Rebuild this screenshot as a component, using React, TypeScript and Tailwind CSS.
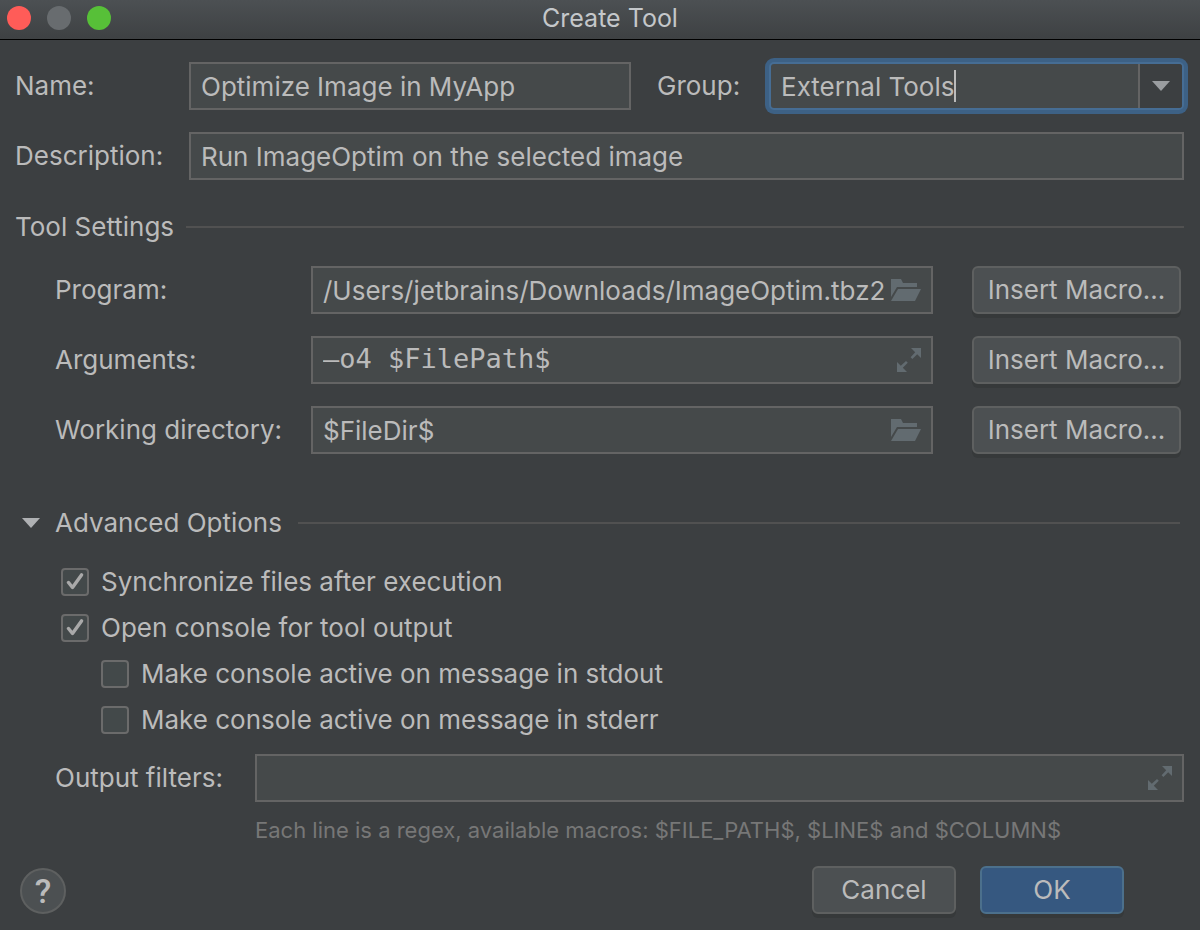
import { useState, type ReactNode } from "react";

const fieldBox =
  "flex h-12 min-w-0 items-center border-2 border-[#646464] bg-[#45494a]";
const fieldInput =
  "h-full min-w-0 flex-1 bg-transparent pl-2.5 text-[#bbbbbb] outline-none";
const pushButton =
  "flex h-12 items-center justify-center rounded-md border-2 border-[#5e6060] bg-[#4c5052] text-[#bbbbbb] shadow-[0_4px_0_#36393a]";

function FolderIcon() {
  return (
    <svg width="30" height="22" viewBox="0 0 30 22" fill="#626b70" aria-hidden="true">
      <path d="M0 0H10L12 4H26V8H6L0 18Z" />
      <path d="M7 10H30L24 22H0Z" />
    </svg>
  );
}

function ExpandIcon() {
  return (
    <svg width="24" height="24" viewBox="0 0 24 24" fill="#626b70" aria-hidden="true">
      <path d="M14 0H24V10L20.2 6.2L15.4 11L13.6 9.2L18.2 4.2Z" />
      <path d="M10 24H0V14L3.8 17.8L9 13L10.8 14.8L5.8 19.8Z" />
    </svg>
  );
}

function Triangle({ color }: { color: string }) {
  return (
    <svg width="18" height="10" viewBox="0 0 18 10" fill={color} aria-hidden="true">
      <path d="M0 0H18L9 10Z" />
    </svg>
  );
}

function SettingRow({
  id,
  label,
  value,
  mono,
  action,
  icon,
}: {
  id: string;
  label: string;
  value: string;
  mono?: boolean;
  action: string;
  icon: ReactNode;
}) {
  return (
    <div className="flex items-center">
      <label htmlFor={id} className="w-64 shrink-0">
        {label}
      </label>
      <div className={`${fieldBox} flex-1 pr-2.5`}>
        <input
          id={id}
          defaultValue={value}
          className={
            mono
              ? `${fieldInput} pb-1 font-['DejaVu_Sans_Mono',monospace] text-[27px]`
              : fieldInput
          }
        />
        <button type="button" aria-label={action} className="shrink-0">
          {icon}
        </button>
      </div>
      <button type="button" className={`${pushButton} ml-[39px] w-[209px] shrink-0`}>
        Insert Macro...
      </button>
    </div>
  );
}

function CheckRow({ label, checked, nested }: { label: string; checked?: boolean; nested?: boolean }) {
  const [on, setOn] = useState(!!checked);
  return (
    <label className={nested ? "flex h-[46px] items-center gap-3 pl-10" : "flex h-[46px] items-center gap-3"}>
      <span className="grid size-7 place-items-center">
        <input
          type="checkbox"
          checked={on}
          onChange={(e) => setOn(e.target.checked)}
          className="size-7 appearance-none rounded-[4px] border-2 border-[#6b6b6b] bg-[#43494a] [grid-area:1/1]"
        />
        {on && (
          <svg
            width="18"
            height="18"
            viewBox="0 0 18 18"
            fill="none"
            stroke="#a9a9a9"
            strokeWidth="3.4"
            strokeLinecap="round"
            strokeLinejoin="round"
            className="pointer-events-none [grid-area:1/1]"
            aria-hidden="true"
          >
            <path d="M2.5 9.5L6.5 14.5L15.5 1.9" />
          </svg>
        )}
      </span>
      <span>{label}</span>
    </label>
  );
}

export default function App() {
  const [open, setOpen] = useState(true);
  return (
    <div className="flex min-h-screen flex-col bg-[#3c3f41] font-['Inter',sans-serif] text-[26px] leading-8 text-[#bbbbbb]">
      <header className="grid h-10 grid-cols-[1fr_auto_1fr] items-center border-b border-black bg-linear-to-b from-[#4c5053] to-[#3e4143] pb-1">
        <div className="flex gap-4 pl-[7px]">
          <button type="button" aria-label="Close" className="size-6 rounded-full bg-[#ff5c58]" />
          <button type="button" aria-label="Minimize" disabled className="size-6 rounded-full bg-[#686c6f]" />
          <button type="button" aria-label="Zoom" className="size-6 rounded-full bg-[#57c038]" />
        </div>
        <h1 className="pl-5 text-[25px] text-[#c4c7ca]">Create Tool</h1>
      </header>

      <form className="flex flex-1 flex-col pt-[22px] pr-4 pb-4 pl-[15px]" onSubmit={(e) => e.preventDefault()}>
        <div className="flex items-center">
          <label htmlFor="name" className="w-[174px] shrink-0">
            Name:
          </label>
          <div className={`${fieldBox} flex-1`}>
            <input id="name" defaultValue="Optimize Image in MyApp" className={fieldInput} />
          </div>
          <label htmlFor="group" className="ml-[26px] w-28 shrink-0">
            Group:
          </label>
          <div className="flex h-12 w-[415px] shrink-0 items-center rounded-[5px] border-2 border-[#466d94] bg-[#45494a] ring-4 ring-[#3d6185]">
            <input
              id="group"
              role="combobox"
              aria-expanded="false"
              defaultValue="External Tools"
              className="h-full field-sizing-content bg-transparent pl-2.5 caret-transparent outline-none"
            />
            <span className="h-8 w-0.5 bg-[#bbbbbb]" />
            <button
              type="button"
              aria-label="Show groups"
              className="ml-auto flex h-full w-11 items-center justify-center rounded-r-[3px] border-l-2 border-[#646464] bg-[#3c3f41]"
            >
              <Triangle color="#9a9da0" />
            </button>
          </div>
        </div>

        <div className="mt-[22px] flex items-center">
          <label htmlFor="description" className="w-[174px] shrink-0">
            Description:
          </label>
          <div className={`${fieldBox} flex-1`}>
            <input id="description" defaultValue="Run ImageOptim on the selected image" className={fieldInput} />
          </div>
        </div>

        <h2 className="mt-[31px] flex items-center gap-3">
          Tool Settings
          <span className="h-0.5 flex-1 bg-[#515151]" />
        </h2>

        <div className="mt-[23px] flex flex-col gap-[22px] pr-[3px] pl-10">
          <SettingRow
            id="program"
            label="Program:"
            value="/Users/jetbrains/Downloads/ImageOptim.tbz2"
            action="Browse for program"
            icon={<FolderIcon />}
          />
          <SettingRow
            id="arguments"
            label="Arguments:"
            value="–o4 $FilePath$"
            mono
            action="Expand arguments"
            icon={<ExpandIcon />}
          />
          <SettingRow
            id="directory"
            label="Working directory:"
            value="$FileDir$"
            action="Browse for directory"
            icon={<FolderIcon />}
          />
        </div>

        <div className="mt-[53px] flex items-center gap-4 pr-1">
          <button
            type="button"
            aria-expanded={open}
            onClick={() => setOpen(!open)}
            className="flex items-center gap-[15px] pl-[7px]"
          >
            <Triangle color="#afb1b3" />
            Advanced Options
          </button>
          <span className="h-0.5 flex-1 bg-[#515151]" />
        </div>

        {open && (
          <div className="mt-5">
            <div className="pl-[46px]">
              <CheckRow label="Synchronize files after execution" checked />
              <CheckRow label="Open console for tool output" checked />
              <CheckRow label="Make console active on message in stdout" nested />
              <CheckRow label="Make console active on message in stderr" nested />
            </div>
            <div className="mt-[11px] grid grid-cols-[200px_1fr] items-center gap-y-3 pl-10">
              <label htmlFor="filters">Output filters:</label>
              <div className={`${fieldBox} pr-2.5`}>
                <input id="filters" className={fieldInput} />
                <button type="button" aria-label="Expand output filters" className="shrink-0">
                  <ExpandIcon />
                </button>
              </div>
              <p className="col-start-2 text-[22px] text-[#777777]">
                Each line is a regex, available macros: $FILE_PATH$, $LINE$ and $COLUMN$
              </p>
            </div>
          </div>
        )}

        <div className="mt-auto flex items-end gap-6 pr-[60px] pl-[5px]">
          <button
            type="button"
            aria-label="Help"
            className="mr-auto flex size-[46px] items-center justify-center rounded-full border-2 border-[#5e6060] bg-[#4c5052] font-['Roboto',sans-serif] text-[34px] font-medium"
          >
            ?
          </button>
          <button type="button" className={`${pushButton} w-36`}>
            Cancel
          </button>
          <button
            type="submit"
            className="flex h-12 w-36 items-center justify-center rounded-md border-2 border-[#4c708c] bg-[#365880] shadow-[0_4px_0_#36393a]"
          >
            OK
          </button>
        </div>
      </form>
    </div>
  );
}
